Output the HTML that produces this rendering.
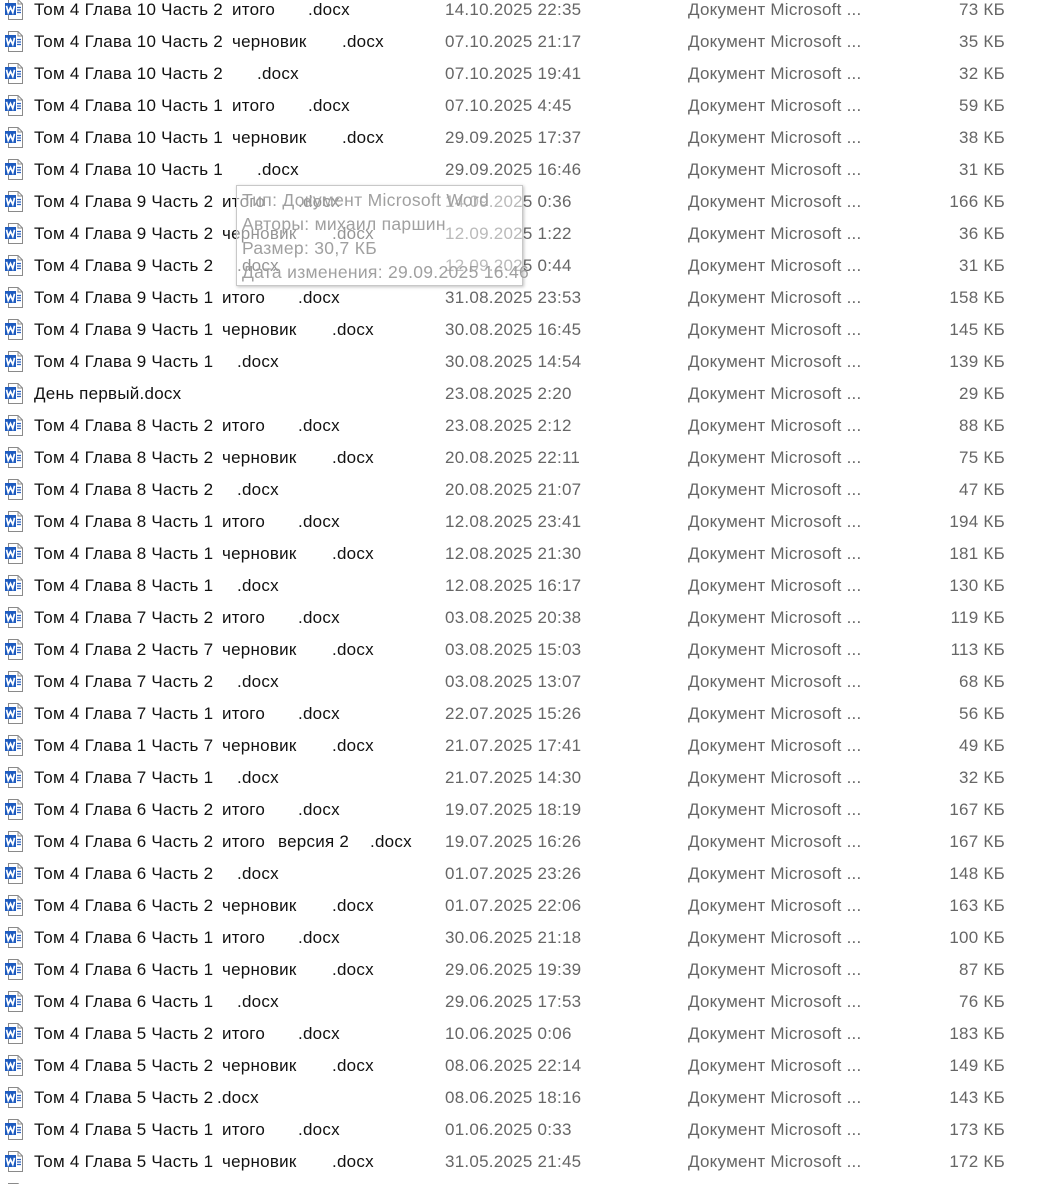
<!DOCTYPE html>
<html><head><meta charset="utf-8">
<style>
html,body{margin:0;padding:0;background:#fff;width:1044px;height:1184px;overflow:hidden;position:relative;font-family:"Liberation Sans","DejaVu Sans",sans-serif;font-size:17px;letter-spacing:0.25px}
.r{position:absolute;left:0;width:1044px;height:32px;line-height:32px}
.r span{position:absolute;top:0;white-space:pre;color:#111}
.r .d{left:445px;color:#666}
.r .t{left:688px;color:#666}
.r .s{right:39px;color:#666}
.r svg{position:absolute;left:4px;top:5px}
.tip{position:absolute;left:236px;top:185px;width:287px;height:101px;border:1px solid #c8c8c8;background:rgba(255,255,255,0.55);box-shadow:1px 1px 3px rgba(0,0,0,0.25);color:#a0a0a0;font-size:17.5px;letter-spacing:0.3px;line-height:24px;padding:2px 0 0 5px;box-sizing:border-box}
.tip div{white-space:nowrap}
</style></head><body>
<svg width="0" height="0" style="position:absolute"><defs>
<symbol id="ic" viewBox="0 0 20 22"><path d="M4.5 0.5H14L18.5 5V20.5H4.5Z" fill="#fff" stroke="#8a8a8a"/><path d="M14 0.5V5H18.5" fill="none" stroke="#8a8a8a"/><rect x="1" y="4" width="11" height="12" fill="#1e5bbf"/><path d="M2.5 6.8L4.2 13.5L6.5 8.5L8.8 13.5L10.5 6.8" fill="none" stroke="#fff" stroke-width="1.7"/><path d="M13 8.5H17M13 11H17M13 13.5H17" stroke="#2b62c0" stroke-width="1.2"/></symbol></defs></svg>

<div class="r" style="top:-6px"><svg width="20" height="22"><use href="#ic"/></svg><span style="left:34px">Том 4 Глава 10 Часть 2</span><span style="left:232px">итого</span><span style="left:308px">.docx</span><span class="d">14.10.2025 22:35</span><span class="t">Документ Microsoft ...</span><span class="s">73 КБ</span></div>
<div class="r" style="top:26px"><svg width="20" height="22"><use href="#ic"/></svg><span style="left:34px">Том 4 Глава 10 Часть 2</span><span style="left:232px">черновик</span><span style="left:342px">.docx</span><span class="d">07.10.2025 21:17</span><span class="t">Документ Microsoft ...</span><span class="s">35 КБ</span></div>
<div class="r" style="top:58px"><svg width="20" height="22"><use href="#ic"/></svg><span style="left:34px">Том 4 Глава 10 Часть 2</span><span style="left:257px">.docx</span><span class="d">07.10.2025 19:41</span><span class="t">Документ Microsoft ...</span><span class="s">32 КБ</span></div>
<div class="r" style="top:90px"><svg width="20" height="22"><use href="#ic"/></svg><span style="left:34px">Том 4 Глава 10 Часть 1</span><span style="left:232px">итого</span><span style="left:308px">.docx</span><span class="d">07.10.2025 4:45</span><span class="t">Документ Microsoft ...</span><span class="s">59 КБ</span></div>
<div class="r" style="top:122px"><svg width="20" height="22"><use href="#ic"/></svg><span style="left:34px">Том 4 Глава 10 Часть 1</span><span style="left:232px">черновик</span><span style="left:342px">.docx</span><span class="d">29.09.2025 17:37</span><span class="t">Документ Microsoft ...</span><span class="s">38 КБ</span></div>
<div class="r" style="top:154px"><svg width="20" height="22"><use href="#ic"/></svg><span style="left:34px">Том 4 Глава 10 Часть 1</span><span style="left:257px">.docx</span><span class="d">29.09.2025 16:46</span><span class="t">Документ Microsoft ...</span><span class="s">31 КБ</span></div>
<div class="r" style="top:186px"><svg width="20" height="22"><use href="#ic"/></svg><span style="left:34px">Том 4 Глава 9 Часть 2</span><span style="left:222px">итого</span><span style="left:298px">.docx</span><span class="d">14.09.2025 0:36</span><span class="t">Документ Microsoft ...</span><span class="s">166 КБ</span></div>
<div class="r" style="top:218px"><svg width="20" height="22"><use href="#ic"/></svg><span style="left:34px">Том 4 Глава 9 Часть 2</span><span style="left:222px">черновик</span><span style="left:332px">.docx</span><span class="d">12.09.2025 1:22</span><span class="t">Документ Microsoft ...</span><span class="s">36 КБ</span></div>
<div class="r" style="top:250px"><svg width="20" height="22"><use href="#ic"/></svg><span style="left:34px">Том 4 Глава 9 Часть 2</span><span style="left:237px">.docx</span><span class="d">12.09.2025 0:44</span><span class="t">Документ Microsoft ...</span><span class="s">31 КБ</span></div>
<div class="r" style="top:282px"><svg width="20" height="22"><use href="#ic"/></svg><span style="left:34px">Том 4 Глава 9 Часть 1</span><span style="left:222px">итого</span><span style="left:298px">.docx</span><span class="d">31.08.2025 23:53</span><span class="t">Документ Microsoft ...</span><span class="s">158 КБ</span></div>
<div class="r" style="top:314px"><svg width="20" height="22"><use href="#ic"/></svg><span style="left:34px">Том 4 Глава 9 Часть 1</span><span style="left:222px">черновик</span><span style="left:332px">.docx</span><span class="d">30.08.2025 16:45</span><span class="t">Документ Microsoft ...</span><span class="s">145 КБ</span></div>
<div class="r" style="top:346px"><svg width="20" height="22"><use href="#ic"/></svg><span style="left:34px">Том 4 Глава 9 Часть 1</span><span style="left:237px">.docx</span><span class="d">30.08.2025 14:54</span><span class="t">Документ Microsoft ...</span><span class="s">139 КБ</span></div>
<div class="r" style="top:378px"><svg width="20" height="22"><use href="#ic"/></svg><span style="left:34px">День первый.docx</span><span class="d">23.08.2025 2:20</span><span class="t">Документ Microsoft ...</span><span class="s">29 КБ</span></div>
<div class="r" style="top:410px"><svg width="20" height="22"><use href="#ic"/></svg><span style="left:34px">Том 4 Глава 8 Часть 2</span><span style="left:222px">итого</span><span style="left:298px">.docx</span><span class="d">23.08.2025 2:12</span><span class="t">Документ Microsoft ...</span><span class="s">88 КБ</span></div>
<div class="r" style="top:442px"><svg width="20" height="22"><use href="#ic"/></svg><span style="left:34px">Том 4 Глава 8 Часть 2</span><span style="left:222px">черновик</span><span style="left:332px">.docx</span><span class="d">20.08.2025 22:11</span><span class="t">Документ Microsoft ...</span><span class="s">75 КБ</span></div>
<div class="r" style="top:474px"><svg width="20" height="22"><use href="#ic"/></svg><span style="left:34px">Том 4 Глава 8 Часть 2</span><span style="left:237px">.docx</span><span class="d">20.08.2025 21:07</span><span class="t">Документ Microsoft ...</span><span class="s">47 КБ</span></div>
<div class="r" style="top:506px"><svg width="20" height="22"><use href="#ic"/></svg><span style="left:34px">Том 4 Глава 8 Часть 1</span><span style="left:222px">итого</span><span style="left:298px">.docx</span><span class="d">12.08.2025 23:41</span><span class="t">Документ Microsoft ...</span><span class="s">194 КБ</span></div>
<div class="r" style="top:538px"><svg width="20" height="22"><use href="#ic"/></svg><span style="left:34px">Том 4 Глава 8 Часть 1</span><span style="left:222px">черновик</span><span style="left:332px">.docx</span><span class="d">12.08.2025 21:30</span><span class="t">Документ Microsoft ...</span><span class="s">181 КБ</span></div>
<div class="r" style="top:570px"><svg width="20" height="22"><use href="#ic"/></svg><span style="left:34px">Том 4 Глава 8 Часть 1</span><span style="left:237px">.docx</span><span class="d">12.08.2025 16:17</span><span class="t">Документ Microsoft ...</span><span class="s">130 КБ</span></div>
<div class="r" style="top:602px"><svg width="20" height="22"><use href="#ic"/></svg><span style="left:34px">Том 4 Глава 7 Часть 2</span><span style="left:222px">итого</span><span style="left:298px">.docx</span><span class="d">03.08.2025 20:38</span><span class="t">Документ Microsoft ...</span><span class="s">119 КБ</span></div>
<div class="r" style="top:634px"><svg width="20" height="22"><use href="#ic"/></svg><span style="left:34px">Том 4 Глава 2 Часть 7</span><span style="left:222px">черновик</span><span style="left:332px">.docx</span><span class="d">03.08.2025 15:03</span><span class="t">Документ Microsoft ...</span><span class="s">113 КБ</span></div>
<div class="r" style="top:666px"><svg width="20" height="22"><use href="#ic"/></svg><span style="left:34px">Том 4 Глава 7 Часть 2</span><span style="left:237px">.docx</span><span class="d">03.08.2025 13:07</span><span class="t">Документ Microsoft ...</span><span class="s">68 КБ</span></div>
<div class="r" style="top:698px"><svg width="20" height="22"><use href="#ic"/></svg><span style="left:34px">Том 4 Глава 7 Часть 1</span><span style="left:222px">итого</span><span style="left:298px">.docx</span><span class="d">22.07.2025 15:26</span><span class="t">Документ Microsoft ...</span><span class="s">56 КБ</span></div>
<div class="r" style="top:730px"><svg width="20" height="22"><use href="#ic"/></svg><span style="left:34px">Том 4 Глава 1 Часть 7</span><span style="left:222px">черновик</span><span style="left:332px">.docx</span><span class="d">21.07.2025 17:41</span><span class="t">Документ Microsoft ...</span><span class="s">49 КБ</span></div>
<div class="r" style="top:762px"><svg width="20" height="22"><use href="#ic"/></svg><span style="left:34px">Том 4 Глава 7 Часть 1</span><span style="left:237px">.docx</span><span class="d">21.07.2025 14:30</span><span class="t">Документ Microsoft ...</span><span class="s">32 КБ</span></div>
<div class="r" style="top:794px"><svg width="20" height="22"><use href="#ic"/></svg><span style="left:34px">Том 4 Глава 6 Часть 2</span><span style="left:222px">итого</span><span style="left:298px">.docx</span><span class="d">19.07.2025 18:19</span><span class="t">Документ Microsoft ...</span><span class="s">167 КБ</span></div>
<div class="r" style="top:826px"><svg width="20" height="22"><use href="#ic"/></svg><span style="left:34px">Том 4 Глава 6 Часть 2</span><span style="left:222px">итого</span><span style="left:278px">версия 2</span><span style="left:370px">.docx</span><span class="d">19.07.2025 16:26</span><span class="t">Документ Microsoft ...</span><span class="s">167 КБ</span></div>
<div class="r" style="top:858px"><svg width="20" height="22"><use href="#ic"/></svg><span style="left:34px">Том 4 Глава 6 Часть 2</span><span style="left:237px">.docx</span><span class="d">01.07.2025 23:26</span><span class="t">Документ Microsoft ...</span><span class="s">148 КБ</span></div>
<div class="r" style="top:890px"><svg width="20" height="22"><use href="#ic"/></svg><span style="left:34px">Том 4 Глава 6 Часть 2</span><span style="left:222px">черновик</span><span style="left:332px">.docx</span><span class="d">01.07.2025 22:06</span><span class="t">Документ Microsoft ...</span><span class="s">163 КБ</span></div>
<div class="r" style="top:922px"><svg width="20" height="22"><use href="#ic"/></svg><span style="left:34px">Том 4 Глава 6 Часть 1</span><span style="left:222px">итого</span><span style="left:298px">.docx</span><span class="d">30.06.2025 21:18</span><span class="t">Документ Microsoft ...</span><span class="s">100 КБ</span></div>
<div class="r" style="top:954px"><svg width="20" height="22"><use href="#ic"/></svg><span style="left:34px">Том 4 Глава 6 Часть 1</span><span style="left:222px">черновик</span><span style="left:332px">.docx</span><span class="d">29.06.2025 19:39</span><span class="t">Документ Microsoft ...</span><span class="s">87 КБ</span></div>
<div class="r" style="top:986px"><svg width="20" height="22"><use href="#ic"/></svg><span style="left:34px">Том 4 Глава 6 Часть 1</span><span style="left:237px">.docx</span><span class="d">29.06.2025 17:53</span><span class="t">Документ Microsoft ...</span><span class="s">76 КБ</span></div>
<div class="r" style="top:1018px"><svg width="20" height="22"><use href="#ic"/></svg><span style="left:34px">Том 4 Глава 5 Часть 2</span><span style="left:222px">итого</span><span style="left:298px">.docx</span><span class="d">10.06.2025 0:06</span><span class="t">Документ Microsoft ...</span><span class="s">183 КБ</span></div>
<div class="r" style="top:1050px"><svg width="20" height="22"><use href="#ic"/></svg><span style="left:34px">Том 4 Глава 5 Часть 2</span><span style="left:222px">черновик</span><span style="left:332px">.docx</span><span class="d">08.06.2025 22:14</span><span class="t">Документ Microsoft ...</span><span class="s">149 КБ</span></div>
<div class="r" style="top:1082px"><svg width="20" height="22"><use href="#ic"/></svg><span style="left:34px">Том 4 Глава 5 Часть 2</span><span style="left:217px">.docx</span><span class="d">08.06.2025 18:16</span><span class="t">Документ Microsoft ...</span><span class="s">143 КБ</span></div>
<div class="r" style="top:1114px"><svg width="20" height="22"><use href="#ic"/></svg><span style="left:34px">Том 4 Глава 5 Часть 1</span><span style="left:222px">итого</span><span style="left:298px">.docx</span><span class="d">01.06.2025 0:33</span><span class="t">Документ Microsoft ...</span><span class="s">173 КБ</span></div>
<div class="r" style="top:1146px"><svg width="20" height="22"><use href="#ic"/></svg><span style="left:34px">Том 4 Глава 5 Часть 1</span><span style="left:222px">черновик</span><span style="left:332px">.docx</span><span class="d">31.05.2025 21:45</span><span class="t">Документ Microsoft ...</span><span class="s">172 КБ</span></div>
<div class="r" style="top:1178px"><svg width="20" height="22"><use href="#ic"/></svg></div>

<div class="tip">
<div>Тип: Документ Microsoft Word</div>
<div>Авторы: михаил паршин</div>
<div>Размер: 30,7 КБ</div>
<div>Дата изменения: 29.09.2025 16:46</div>
</div>
</body></html>
